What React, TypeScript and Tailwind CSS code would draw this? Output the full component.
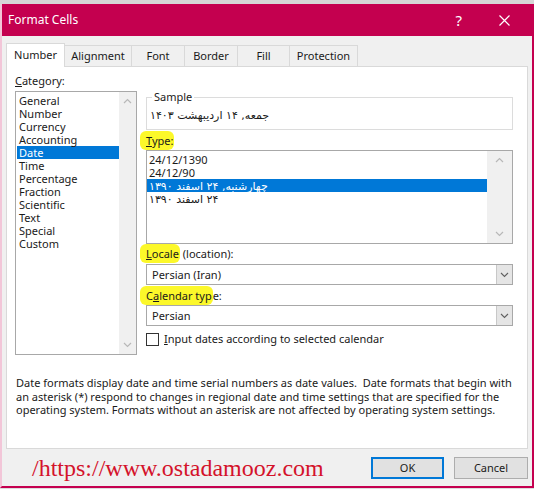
import type { ReactNode } from 'react'

const UI = "font-['Noto_Sans','DejaVu_Sans',sans-serif]"

const CATEGORIES = ['General', 'Number', 'Currency', 'Accounting', 'Date', 'Time', 'Percentage', 'Fraction', 'Scientific', 'Text', 'Special', 'Custom']

const TYPES = [
  { label: '24/12/1390', rtl: false },
  { label: '24/12/90', rtl: false },
  { label: 'چهارشنبه, ۲۴ اسفند ۱۳۹۰', rtl: true },
  { label: '۲۴ اسفند ۱۳۹۰', rtl: true },
]

const TABS = [
  { name: 'Number', w: 'w-[59px]' },
  { name: 'Alignment', w: 'w-[67px]' },
  { name: 'Font', w: 'w-[53px]' },
  { name: 'Border', w: 'w-[53px]' },
  { name: 'Fill', w: 'w-[52px]' },
  { name: 'Protection', w: 'w-[68px]' },
]

function Chevron({ up = false }: { up?: boolean }) {
  return (
    <svg width="9" height="6" viewBox="0 0 9 6" className="block">
      <path d={up ? 'M1 5 L4.5 1.5 L8 5' : 'M1 1 L4.5 4.5 L8 1'} fill="none" stroke="#b8b8b8" strokeWidth="1.2" />
    </svg>
  )
}

function Scrollbar({ w }: { w: string }) {
  return (
    <div className={`${w} h-full bg-[#f0f0f0] flex flex-col items-center justify-between py-[6px]`}>
      <Chevron up />
      <Chevron />
    </div>
  )
}

function Marked({ children }: { children: ReactNode }) {
  return <span className="bg-[#fcf82a] rounded-[6px] -ml-[6px] pl-[6px] pr-[1px] py-[2px]">{children}</span>
}

function Combo({ value }: { value: string }) {
  return (
    <div className="h-[21px] border border-[#a8a8a8] bg-white flex items-stretch">
      <div className="flex-1 pl-[5px] leading-[19px]">{value}</div>
      <div className="w-[16px] bg-[#e5e5e5] border-l border-[#c8c8c8] flex items-center justify-center">
        <svg width="9" height="6" viewBox="0 0 9 6">
          <path d="M1 1 L4.5 4.5 L8 1" fill="none" stroke="#606060" strokeWidth="1.1" />
        </svg>
      </div>
    </div>
  )
}

function Persian({ text }: { text: string }) {
  return <span dir="rtl" className="font-['DejaVu_Sans',sans-serif] text-[11px]">{text}</span>
}

export default function App() {
  return (
    <div className={`w-[534px] h-[489px] bg-[#dcdcdc] overflow-hidden text-[11px] text-[#1a1a1a] ${UI}`}>
      <div className="h-[4px] bg-[#d6d6d6]" />
      <div className="h-[484px] bg-[#f0f0f0] border-l-[2px] border-l-[#f2c6d8] border-r-[2px] border-r-[#c4004f] border-b-[2px] border-b-[#c4004f] flex flex-col">
        {/* Title bar */}
        <div className="h-[32px] bg-[#c4004f] text-white flex items-center pl-[6px] pr-[22px]">
          <div className="flex-1 text-[12px]">Format Cells</div>
          <div className="text-[15px] mr-[37px]">?</div>
          <svg width="11" height="11" viewBox="0 0 11 11">
            <path d="M0.5 0.5 L10.5 10.5 M10.5 0.5 L0.5 10.5" stroke="#fff" strokeWidth="1.2" />
          </svg>
        </div>

        {/* Tabs */}
        <div className="flex items-end pl-[4px] mt-[7px] h-[23px] relative z-10">
          {TABS.map((t, i) =>
            i === 0 ? (
              <div key={t.name} className={`${t.w} h-[24px] bg-white border border-[#d9d9d9] border-b-0 flex items-center justify-center -mb-[1px]`}>
                {t.name}
              </div>
            ) : (
              <div key={t.name} className={`${t.w} h-[21px] bg-[#f0f0f0] border border-[#d9d9d9] border-l-0 border-b-0 flex items-center justify-center`}>
                {t.name}
              </div>
            )
          )}
        </div>

        {/* Panel */}
        <div className="mx-[4px] h-[383px] bg-white border border-[#d9d9d9] px-[8px] pt-[7px]">
          <div className="flex gap-[9px]">
            {/* Category */}
            <div className="w-[122px]">
              <div className="h-[14px] leading-[14px]"><u>C</u>ategory:</div>
              <div className="mt-[3px] h-[264px] border border-[#a8a8a8] flex">
                <div className="flex-1 pt-[2px] pl-[1px]">
                  {CATEGORIES.map(c => (
                    <div key={c} className={`h-[13px] leading-[13px] pl-[2px] ${c === 'Date' ? 'bg-[#0078d7] text-white' : ''}`}>{c}</div>
                  ))}
                </div>
                <Scrollbar w="w-[17px]" />
              </div>
            </div>

            {/* Right column */}
            <div className="w-[367px] pt-[16px]">
              <fieldset className="h-[40px] border border-[#dcdcdc] px-[3px]">
                <legend className="px-[2px] ml-[2px] leading-[14px]">Sample</legend>
                <div className="h-[24px] leading-[22px]">
                  <Persian text="جمعه, ۱۴ اردیبهشت ۱۴۰۳" />
                </div>
              </fieldset>

              <div className="mt-[3px] h-[15px] leading-[15px]"><Marked><u>T</u>ype:</Marked></div>
              <div className="mt-[2px] h-[94px] border border-[#a8a8a8] flex">
                <div className="flex-1 pt-[2px]">
                  {TYPES.map((t, i) => (
                    <div key={i} className={`h-[13px] leading-[13px] pl-[2px] overflow-hidden ${i === 2 ? 'bg-[#0078d7] text-white' : ''}`}>
                      {t.rtl ? <Persian text={t.label} /> : t.label}
                    </div>
                  ))}
                </div>
                <Scrollbar w="w-[25px]" />
              </div>

              <div className="mt-[2px] h-[15px] leading-[15px]"><Marked><u>L</u>ocale</Marked> (location):</div>
              <div className="mt-[3px]"><Combo value="Persian (Iran)" /></div>

              <div className="mt-[3px] h-[15px] leading-[15px]"><Marked>C<u>a</u>lendar typ</Marked>e:</div>
              <div className="mt-[2px]"><Combo value="Persian" /></div>

              <div className="mt-[6px] flex items-center h-[14px]">
                <div className="w-[13px] h-[13px] border border-[#333] bg-white" />
                <div className="ml-[5px]"><u>I</u>nput dates according to selected calendar</div>
              </div>
            </div>
          </div>

          <p className="mt-[21px] leading-[13.5px] pl-[1px] pr-[4px]">
            Date formats display date and time serial numbers as date values.&nbsp; Date formats that begin with an asterisk (*) respond to changes in regional date and time settings that are specified for the operating system. Formats without an asterisk are not affected by operating system settings.
          </p>
        </div>

        {/* Footer */}
        <div className="flex-1 flex items-center pl-[30px] pr-[4px] pt-[1px]">
          <div className="flex-1 text-[#d4122b] text-[24px] font-['Liberation_Serif',serif] leading-none">/https://www.ostadamooz.com</div>
          <div className="w-[73px] h-[22px] border-2 border-[#0078d7] bg-[#e1e1e1] flex items-center justify-center">OK</div>
          <div className="w-[74px] h-[22px] ml-[10px] border border-[#adadad] bg-[#e1e1e1] flex items-center justify-center">Cancel</div>
        </div>
      </div>
    </div>
  )
}
